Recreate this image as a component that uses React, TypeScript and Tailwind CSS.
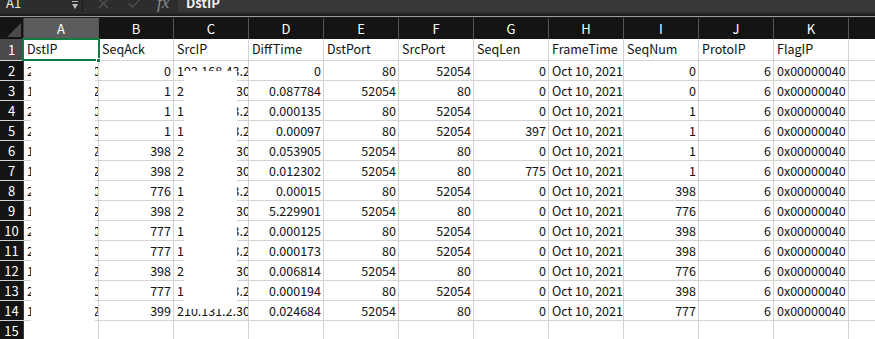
import { X, Check } from 'lucide-react'

const COLS = ['A', 'B', 'C', 'D', 'E', 'F', 'G', 'H', 'I', 'J', 'K']
const HEAD = ['DstIP', 'SeqAck', 'SrcIP', 'DiffTime', 'DstPort', 'SrcPort', 'SeqLen', 'FrameTime', 'SeqNum', 'ProtoIP', 'FlagIP']

const SRV = '210.131.2.30'
const CLI = '192.168.43.2'

// dst, ack, src, diff, dport, sport, len, seq
const DATA: [string, number, string, string, number, number, number, number][] = [
  [SRV, 0, CLI, '0', 80, 52054, 0, 0],
  [CLI, 1, SRV, '0.087784', 52054, 80, 0, 0],
  [SRV, 1, CLI, '0.000135', 80, 52054, 0, 1],
  [SRV, 1, CLI, '0.00097', 80, 52054, 397, 1],
  [CLI, 398, SRV, '0.053905', 52054, 80, 0, 1],
  [CLI, 398, SRV, '0.012302', 52054, 80, 775, 1],
  [SRV, 776, CLI, '0.00015', 80, 52054, 0, 398],
  [CLI, 398, SRV, '5.229901', 52054, 80, 0, 776],
  [SRV, 777, CLI, '0.000125', 80, 52054, 0, 398],
  [SRV, 777, CLI, '0.000173', 80, 52054, 0, 398],
  [CLI, 398, SRV, '0.006814', 52054, 80, 0, 776],
  [SRV, 777, CLI, '0.000194', 80, 52054, 0, 398],
  [CLI, 399, SRV, '0.024684', 52054, 80, 0, 777],
]

const font = { fontFamily: '"Noto Sans CJK JP", "Noto Sans", sans-serif' }

function Cell({ v, right }: { v?: string | number; right?: boolean }) {
  return (
    <div
      className={`w-[75px] shrink-0 h-full border-r border-[#d4d4d4] overflow-hidden whitespace-nowrap leading-[19px] text-[#111111] ${
        right ? 'text-right pr-[2px]' : 'pl-[3px]'
      }`}
    >
      {v}
    </div>
  )
}

function RowHead({ n, sel }: { n: number; sel?: boolean }) {
  return (
    <div
      className={`w-[24px] shrink-0 h-full flex items-center justify-center text-white text-[13px] border-r border-[#3a3a3a] ${
        sel ? 'bg-[#4b4b4b]' : 'bg-[#141414]'
      }`}
    >
      {n}
    </div>
  )
}

export default function App() {
  return (
    <div className="w-[875px] h-[339px] overflow-hidden bg-white" style={font}>
      {/* formula bar */}
      <div className="h-[14px] overflow-hidden bg-[#2d2d2d]">
        <div className="flex items-center h-[18px] -mt-[6px]">
          <div className="w-[82px] shrink-0 flex items-center justify-between pl-[6px] pr-[4px] text-[13px] text-[#e6e6e6]">
            <span>A1</span>
            <div className="flex flex-col items-center gap-[2px] mt-[4px]">
              <div className="w-[6px] h-[1px] bg-[#bdbdbd]" />
              <div className="w-0 h-0 border-l-[3px] border-r-[3px] border-t-[5px] border-l-transparent border-r-transparent border-t-[#bdbdbd]" />
            </div>
          </div>
          <div className="w-[1px] h-full bg-[#1c1c1c]" />
          <div className="w-[95px] shrink-0 flex items-center">
            <X size={17} strokeWidth={1.6} color="#555555" className="ml-[12px]" />
            <Check size={17} strokeWidth={1.6} color="#555555" className="ml-[14px]" />
            <span className="ml-[14px] text-[17px] italic text-[#8c8c8c]" style={{ fontFamily: '"Liberation Serif", serif' }}>
              fx
            </span>
          </div>
          <div className="flex-1 h-full bg-[#383838] flex items-center pl-[8px] text-[13px] font-bold text-[#f0f0f0]">
            DstIP
          </div>
        </div>
      </div>
      <div className="h-[2px] bg-[#1c1c1c]" />
      <div className="h-[1px] bg-[#9a9a9a]" />
      <div className="h-[1px] bg-[#1c1c1c]" />

      {/* sheet */}
      <div className="relative text-[12.5px]">
        {/* column headers */}
        <div className="flex h-[21px] bg-[#141414] text-[13px] text-white">
          <div className="w-[24px] shrink-0 h-full relative border-r border-[#3a3a3a]">
            <div
              className="absolute right-[2px] bottom-[2px] w-[14px] h-[14px] bg-[#4a4a4a]"
              style={{ clipPath: 'polygon(100% 0, 100% 100%, 0 100%)' }}
            />
          </div>
          {COLS.map((c, i) => (
            <div
              key={c}
              className={`w-[75px] shrink-0 h-full flex items-center justify-center border-r border-[#555555] ${
                i === 0 ? 'bg-[#5c5c5c]' : ''
              }`}
            >
              {c}
            </div>
          ))}
          <div className="flex-1" />
        </div>

        {/* row 1 */}
        <div className="flex h-[22px] border-b border-[#d4d4d4]">
          <RowHead n={1} sel />
          {HEAD.map((h) => (
            <Cell key={h} v={h} />
          ))}
          <div className="flex-1" />
        </div>

        {DATA.map((r, i) => (
          <div key={i} className="flex h-[20px] border-b border-[#d4d4d4]">
            <RowHead n={i + 2} />
            <Cell v={r[0]} />
            <Cell v={r[1]} right />
            <Cell v={r[2]} />
            <Cell v={r[3]} right />
            <Cell v={r[4]} right />
            <Cell v={r[5]} right />
            <Cell v={r[6]} right />
            <Cell v="Oct 10, 2021" />
            <Cell v={r[7]} right />
            <Cell v={6} right />
            <Cell v="0x00000040" />
            <div className="flex-1" />
          </div>
        ))}

        <div className="flex h-[20px] border-b border-[#d4d4d4]">
          <RowHead n={15} />
          {COLS.map((c) => (
            <Cell key={c} />
          ))}
          <div className="flex-1" />
        </div>

        {/* selection A1 */}
        <div className="absolute left-[22px] top-[20px] w-[78px] h-[23px] border-2 border-[#107c41]" />
        <div className="absolute left-[96px] top-[40px] w-[5px] h-[5px] bg-[#107c41] border border-white" />

        {/* redactions */}
        <div className="absolute left-[31px] top-[44px] w-[64px] h-[259px] bg-white" />
        <div className="absolute left-[184px] top-[53px] w-[53px] h-[238px] bg-white" />
      </div>
    </div>
  )
}
